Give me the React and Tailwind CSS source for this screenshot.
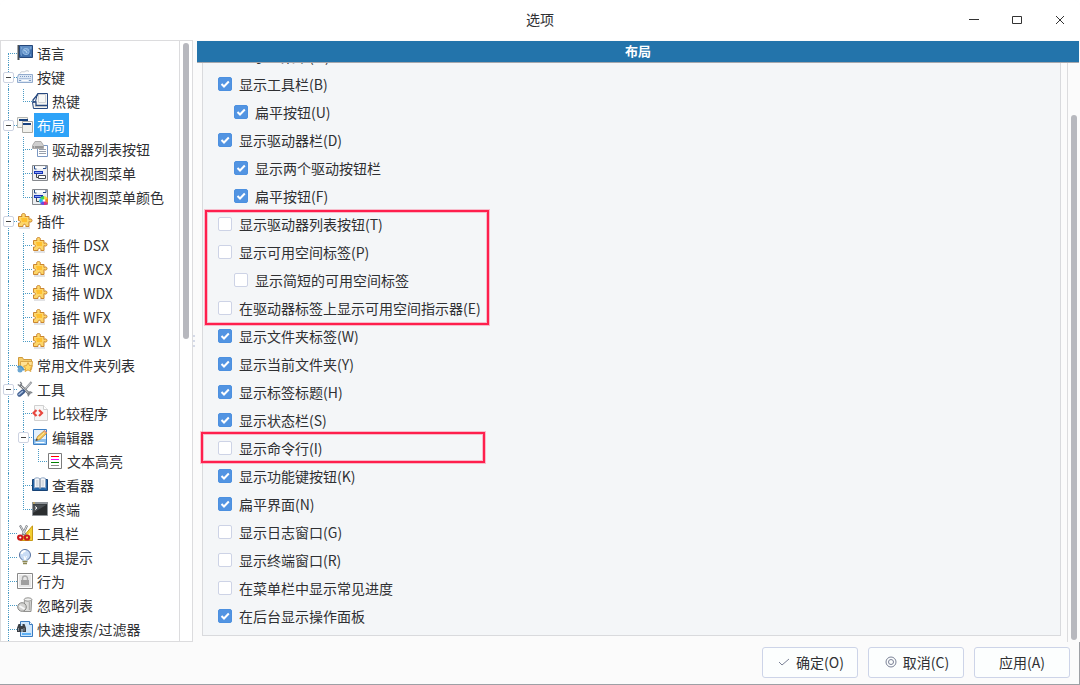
import React, { useState } from 'react';

const Svg = ({ children }) => (
  <svg width="16" height="16" viewBox="0 0 16 16" fill="none" className="block shrink-0" aria-hidden="true">
    {children}
  </svg>
);

/* Tree icons */
const icons = {
  flag: (
    <Svg>
      <path d="M.5 0h2v15h-2z" fill="#4b5157" />
      <path d="M2.500.5h13v12h-13z" fill="#3f6fac" stroke="#24477a" />
      <path d="M3 1h12v3L3 10z" fill="#5f8dc3" />
      <circle cx="9" cy="6.500" r="3.200" fill="#6c9bd0" stroke="#8fb8e2" />
      <path d="M7 5l2 1 1 2M10 4.500l1 1" stroke="#b8d6f2" />
      <path d="M4 3h1M13 3h1M4 10h1M13 10h1" stroke="#8fb8e2" />
    </Svg>
  ),
  keyboard: (
    <Svg>
      <path d="M3 4.500c1-3 4-1 5-2s3-1 4 0" stroke="#c3c8cf" />
      <path d="M1.500 5.500h14v8H.5v-5z" fill="#dde8f5" stroke="#93acce" />
      <path d="M3 7.500h11M2.500 9.500h12" stroke="#7c9ac4" strokeDasharray="1 1" />
      <path d="M2 11.500h2M12 11.500h2" stroke="#7c9ac4" />
      <path d="M5 11.500h6" stroke="#fff" />
    </Svg>
  ),
  hotkey: (
    <Svg>
      <path d="M5.500.5h10v15H1.500L.5 9.500l3-1z" fill="#f4f4f1" stroke="#27487f" />
      <path d="M6.500 1.500h7v8h-7z" fill="#f8f8f6" stroke="#d0d2d5" />
      <path d="M6 1L1 7v2h3v3.500h11" stroke="#27487f" strokeWidth="1.300" />
      <path d="M3 13.500h11" stroke="#bcbfc4" />
    </Svg>
  ),
  windows: (
    <Svg>
      <path d="M.5.5h10v10H.5z" fill="#f5f5f1" stroke="#b7b8b3" />
      <path d="M2 2h9v2H2z" fill="#18427f" />
      <path d="M5.500 4.500h10v11h-10z" fill="#f1f1ec" stroke="#aaaaa5" />
      <path d="M6 5h9v3H6z" fill="#fff" />
      <path d="M6 6h8v2H6z" fill="#18427f" />
    </Svg>
  ),
  driveList: (
    <Svg>
      <path d="M5.500 4.500h10v11h-10z" fill="#fff" stroke="#7b98c3" />
      <path d="M7 8.500h7M7 10.500h7M7 12.500h7" stroke="#98a0ac" />
      <path d="M3 .5h6l2.500 4v3H.5v-3z" fill="#cfcfcf" stroke="#ababab" />
      <path d="M1 5h10v2H1z" fill="#979797" />
      <path d="M2 6h1" stroke="#e8e8e8" />
    </Svg>
  ),
  treeMenu: (
    <Svg>
      <path d="M.5.500h15v15H.5z" fill="#eceef1" stroke="#85888d" />
      <path d="M2 1.500h12v2H2z" fill="#fff" />
      <path d="M2.500 1v3h2M11 3.500h3V1" stroke="#274a86" />
      <path d="M2 6h9v3H2z" fill="#1735b8" />
      <path d="M3 7.500h7" stroke="#8aa0f5" />
      <path d="M4.500 9v3.500H6" stroke="#444" />
      <path d="M6.500 10.500h7v3h-7z" fill="#fff" stroke="#454a52" />
    </Svg>
  ),
  treeColor: (
    <Svg>
      <path d="M.5.500h15v15H.5z" fill="#eceef1" stroke="#85888d" />
      <path d="M2 1.500h12v2H2z" fill="#fff" />
      <path d="M2.500 1v3h2M11 3.500h3V1" stroke="#274a86" />
      <path d="M2 6h9v3H2z" fill="#1735b8" />
      <path d="M3 7.500h6" stroke="#8aa0f5" />
      <path d="M4.500 9v3.500H7" stroke="#454a52" />
      <path d="M12 11.500V7a4.500 4.500 0 0 1 4 2.500z" fill="#f4e13a" />
      <path d="M12 11.500l4-2.500v5z" fill="#f08a24" />
      <path d="M12 11.500l4 2.500a4.500 4.500 0 0 1-4 2z" fill="#e5307c" />
      <path d="M12 11.500V16a4.500 4.500 0 0 1-4-2z" fill="#6a4be8" />
      <path d="M12 11.500L8 14a4.500 4.500 0 0 1 0-5z" fill="#22b9e8" />
      <path d="M12 11.500L8 9a4.500 4.500 0 0 1 4-2z" fill="#3fd05a" />
      <circle cx="12" cy="11.500" r="1.200" fill="#fff" />
    </Svg>
  ),
  puzzle: (
    <Svg>
      <path d="M2 15h11" stroke="#c3c6cc" />
      <path
        d="M1.500 3.500H5C4 1.500 5 .5 6.500.5S9 1.500 8 3.500h4v3c1-1 3-.8 3 1s-2 2-3 1v5H8.800c.7-3-3.300-3-2.800 0H1.500V10c2.500 1 2.500-3 0-2.500z"
        fill="#fdd669"
        stroke="#cb8630"
      />
      <path d="M4 5h6v4H5z" fill="#ffc02f" />
    </Svg>
  ),
  folderStar: (
    <Svg>
      <path d="M1.500.5h4l1 2h8v9h-13z" fill="#f5cd6b" stroke="#cf9a3c" />
      <path d="M3.500 4.500h12l-1 8h-11z" fill="#ffe193" stroke="#d9a647" />
      <path d="M.5 10.500c2-2 5-1 6 3" stroke="#4d97cf" strokeWidth="2" />
      <circle cx="3" cy="13" r="2.500" fill="#6aa6d2" />
      <path d="M11 5.500l1.500 3 3 .4-2.300 2.300.7 3.300-2.900-1.600L8 14.500l.6-3.300L6.500 9l3-.4z" fill="#ffd966" stroke="#d7982f" strokeWidth=".8" />
    </Svg>
  ),
  tools: (
    <Svg>
      <path d="M3 4l10 9.500" stroke="#6d7176" strokeWidth="2.600" />
      <path d="M3.500 4.500l9 8.500" stroke="#dcdee0" />
      <path d="M.8 3.500l2 1.300L4.600 3 3.300.8M11.500 15.300l-.5-2.300 2-2.200 2.300 1" stroke="#7c8187" strokeWidth="1.300" />
      <path d="M14.500 1L8 8.500" stroke="#8b8f95" strokeWidth="2" />
      <path d="M14 1.500l-5.500 6" stroke="#e3e5e7" strokeWidth=".8" />
      <path d="M6 10.500l-3.500 3" stroke="#3f5d8e" strokeWidth="4.400" strokeLinecap="round" />
      <path d="M5.500 10.500l-3.500 3" stroke="#a9bfdf" strokeWidth="1.600" strokeLinecap="round" />
    </Svg>
  ),
  diff: (
    <Svg>
      <path d="M2.500.5h9l4 4v11h-13z" fill="#f7f7f7" stroke="#d0d0d0" />
      <path d="M11.500.5v4h4" fill="#fff" stroke="#d0d0d0" />
      <path d="M4.500 5L1.500 8l3 3M7 5l3 3-3 3" stroke="#e8473e" strokeWidth="2.200" />
    </Svg>
  ),
  editor: (
    <Svg>
      <path d="M1.500.5h13v15h-13z" fill="#e4f0fb" stroke="#3d7fc4" />
      <path d="M2 10h12v5H2z" fill="#8cc0ee" />
      <path d="M3.500 13.500h9" stroke="#fff" />
      <path d="M4 11.500l1.500-4 7-6L15 4l-7 6.500z" fill="#f6c552" stroke="#b88a3c" strokeWidth=".8" />
      <path d="M6 9.500l6.500-6" stroke="#fde9a8" />
      <path d="M12 1.500L14.500 4" stroke="#e0948a" strokeWidth="1.500" />
      <path d="M3.500 12l1-2.500 1.500 1.500z" fill="#3a3f48" />
    </Svg>
  ),
  highlight: (
    <Svg>
      <path d="M1.500.5h13v15h-13z" fill="#fff" stroke="#7c7c7c" />
      <path d="M4 3.500h8" stroke="#f00" />
      <path d="M4 6.500h8" stroke="#f0f" />
      <path d="M4 9.500h8" stroke="#008000" />
      <path d="M4 12.500h8" stroke="#8c8c8c" />
    </Svg>
  ),
  book: (
    <Svg>
      <path d="M.5 2.500h15v11H.5z" fill="#2465a8" stroke="#174275" />
      <path d="M2.500 1.500c2-1 4-1 5.500.5 1.500-1.500 3.500-1.500 5.500-.5V11c-2-1-4-1-5.500.5C6.500 10 4.500 10 2.500 11z" fill="#f4f6f9" stroke="#8ea6c4" />
      <path d="M8 2v9.500" stroke="#66778c" />
      <path d="M4 4h2.500M4 6h2.500M4 8h2.500M9.500 4H12M9.500 6H12M9.500 8H12" stroke="#bcc4ce" />
    </Svg>
  ),
  terminal: (
    <Svg>
      <path d="M.5 1.500h15v13H.5z" fill="#2b2e30" stroke="#8f9499" />
      <path d="M0 1h16v2H0z" fill="#8f9499" />
      <path d="M1 2h2" stroke="#e0b13c" />
      <path d="M1 3.500h14L1 12z" fill="#4b5054" />
      <path d="M3 5.500l2 1.500-2 1.500" stroke="#fff" />
    </Svg>
  ),
  scissors: (
    <Svg>
      <path d="M15.500.8v14.700H3z" fill="#f2cf32" stroke="#c79a17" />
      <path d="M13 7.500v5H9z" fill="#fff3a7" />
      <path d="M3 .5l5.500 9.500M10 .5L5.500 10" stroke="#777b80" strokeWidth="2.200" />
      <path d="M3.500 1l4.500 8.500M9.700 1L6 9" stroke="#dcdee0" />
      <ellipse cx="3.300" cy="12.500" rx="2.200" ry="2" stroke="#cc1a1c" strokeWidth="2.200" />
      <ellipse cx="10" cy="12.500" rx="2.200" ry="2" stroke="#cc1a1c" strokeWidth="2.200" />
    </Svg>
  ),
  bulb: (
    <Svg>
      <circle cx="8" cy="6" r="5.500" fill="#c9dcf5" stroke="#55709f" />
      <path d="M5.500 10.500h5v2h-5z" fill="#c9dcf5" />
      <path d="M4.500 5c.5-2 2-3 4-3" stroke="#fff" strokeWidth="2" />
      <path d="M7 7l1 4 1.500-4" stroke="#fff" />
      <path d="M5.500 12.500h5M6 14.500h4" stroke="#8c8752" strokeWidth="1.500" />
    </Svg>
  ),
  lock: (
    <Svg>
      <path d="M.5.5h15v15H.5z" fill="#fbfbfb" stroke="#888" />
      <path d="M2 2h12v12H2z" fill="#e6e6e6" />
      <path d="M5.500 7V5.500a2.500 2.500 0 0 1 5 0V7" stroke="#a8a8a8" strokeWidth="1.400" />
      <path d="M4 7h8v5H4z" fill="#9f9f9f" />
    </Svg>
  ),
  ignore: (
    <Svg>
      <path d="M7.500 2.500h7.200l-.7 12H6.500z" fill="#dcdcda" stroke="#939391" />
      <ellipse cx="11" cy="2.500" rx="3.800" ry="1.700" fill="#f1f1f0" stroke="#939391" />
      <path d="M12.500 5v8" stroke="#b0b0ae" strokeWidth="1.500" />
      <circle cx="5" cy="10" r="4.300" fill="#d3d3d1" stroke="#878785" />
      <path d="M2.500 9l5 3" stroke="#f7f7f7" strokeWidth="2" />
    </Svg>
  ),
  search: (
    <Svg>
      <path d="M3.500.5h9l3 3v12h-12z" fill="#cfe6fb" stroke="#3a7cc2" />
      <path d="M12.500.5v3h3" fill="#fff" stroke="#3a7cc2" />
      <path d="M5 12h9v2H5z" fill="#5fb1f5" />
      <path d="M1.500 3h2v2h2V3h2L9 7v4H5.500V8h-1v3H0V7z" fill="#3b3f45" />
      <path d="M1.500 7v3M7 7v3" stroke="#858c95" />
    </Svg>
  ),
};

const tree = [
  { name: '语言', icon: 'flag' },
  { name: '按键', icon: 'keyboard', children: [{ name: '热键', icon: 'hotkey' }] },
  {
    name: '布局',
    icon: 'windows',
    children: [
      { name: '驱动器列表按钮', icon: 'driveList' },
      { name: '树状视图菜单', icon: 'treeMenu' },
      { name: '树状视图菜单颜色', icon: 'treeColor' },
    ],
  },
  {
    name: '插件',
    icon: 'puzzle',
    children: [
      { name: '插件 DSX', icon: 'puzzle' },
      { name: '插件 WCX', icon: 'puzzle' },
      { name: '插件 WDX', icon: 'puzzle' },
      { name: '插件 WFX', icon: 'puzzle' },
      { name: '插件 WLX', icon: 'puzzle' },
    ],
  },
  { name: '常用文件夹列表', icon: 'folderStar' },
  {
    name: '工具',
    icon: 'tools',
    children: [
      { name: '比较程序', icon: 'diff' },
      { name: '编辑器', icon: 'editor', children: [{ name: '文本高亮', icon: 'highlight' }] },
      { name: '查看器', icon: 'book' },
      { name: '终端', icon: 'terminal' },
    ],
  },
  { name: '工具栏', icon: 'scissors' },
  { name: '工具提示', icon: 'bulb' },
  { name: '行为', icon: 'lock' },
  { name: '忽略列表', icon: 'ignore' },
  { name: '快速搜索/过滤器', icon: 'search' },
];

const optionGroups = [
  {
    items: [
      { label: '显示主菜单(M)', checked: true },
      { label: '显示工具栏(B)', checked: true },
      { label: '扁平按钮(U)', checked: true, indent: true },
      { label: '显示驱动器栏(D)', checked: true },
      { label: '显示两个驱动按钮栏', checked: true, indent: true },
      { label: '扁平按钮(F)', checked: true, indent: true },
    ],
  },
  {
    mark: 'top-0 -bottom-[3px] left-0.5',
    items: [
      { label: '显示驱动器列表按钮(T)' },
      { label: '显示可用空间标签(P)' },
      { label: '显示简短的可用空间标签', indent: true },
      { label: '在驱动器标签上显示可用空间指示器(E)' },
    ],
  },
  {
    items: [
      { label: '显示文件夹标签(W)', checked: true },
      { label: '显示当前文件夹(Y)', checked: true },
      { label: '显示标签标题(H)', checked: true },
      { label: '显示状态栏(S)', checked: true },
    ],
  },
  {
    mark: '-top-0.5 -bottom-px -left-0.5',
    items: [{ label: '显示命令行(I)' }],
  },
  {
    items: [
      { label: '显示功能键按钮(K)', checked: true },
      { label: '扁平界面(N)', checked: true },
      { label: '显示日志窗口(G)' },
      { label: '显示终端窗口(R)' },
      { label: '在菜单栏中显示常见进度' },
      { label: '在后台显示操作面板', checked: true },
    ],
  },
];

const TreeNode = ({ node, guides = [], first, last, selected, onSelect }) => {
  const [open, setOpen] = useState(true);
  const active = selected === node.name;

  return (
    <li>
      <div className="relative flex h-6 pl-[7px]">
        {guides.map((line, i) => (
          <span key={i} className={`w-[15px] shrink-0 border-dotted border-[#4b9bc4] ${line ? 'border-l' : ''}`} />
        ))}
        <span className="relative flex w-[9px] shrink-0 flex-col">
          <span className={`h-[13px] border-b border-dotted border-[#4b9bc4] ${first ? '' : 'border-l'}`} />
          <span className={`h-[11px] border-dotted border-[#4b9bc4] ${last ? '' : 'border-l'}`} />
          {node.children && (
            <button
              type="button"
              aria-label={node.name}
              aria-expanded={open}
              onClick={() => setOpen(!open)}
              className="absolute top-[7px] -left-[5px] flex size-[11px] items-center justify-center rounded-xs border border-[#cdd3e2] bg-white"
            >
              <span className="h-px w-[5px] bg-[#444]" />
            </button>
          )}
        </span>
        <span className="flex items-center">{icons[node.icon]}</span>
        <button
          type="button"
          onClick={() => onSelect(node.name)}
          className={`ml-px h-6 pr-1 pl-[3px] leading-6 whitespace-nowrap ${active ? 'bg-[#2ea3f8] text-white' : ''}`}
        >
          {node.name}
        </button>
      </div>
      {node.children && open && (
        <ul>
          {node.children.map((child, i) => (
            <TreeNode
              key={child.name}
              node={child}
              guides={[...guides, !last]}
              last={i === node.children.length - 1}
              selected={selected}
              onSelect={onSelect}
            />
          ))}
        </ul>
      )}
    </li>
  );
};

const Option = ({ label, checked, indent }) => (
  <label className={`flex h-7 items-center gap-[7px] ${indent ? 'pl-[31px]' : 'pl-[15px]'}`}>
    <span className="relative flex size-3.5">
      <input
        type="checkbox"
        defaultChecked={checked}
        className="peer size-3.5 appearance-none rounded-xs border border-[#cdd3e6] bg-white checked:border-[#4c90e0] checked:bg-[#5294e2]"
      />
      <svg viewBox="0 0 14 14" className="pointer-events-none absolute inset-0 hidden size-3.5 peer-checked:block" fill="none">
        <path d="M3.500 7l2.500 2.500 4.800-5" stroke="#fff" strokeWidth="2" />
      </svg>
    </span>
    {label}
  </label>
);

const Sidebar = () => {
  const [selected, setSelected] = useState('布局');

  return (
    <nav className="flex w-[193px] shrink-0 border border-[#dcdcde] bg-white">
      <ul className="flex-1 overflow-hidden">
        {tree.map((node, i) => (
          <TreeNode key={node.name} node={node} first={i === 0} selected={selected} onSelect={setSelected} />
        ))}
      </ul>
      {/* Scrollbar */}
      <div className="flex w-[13px] justify-center border-l border-[#dcdcde] pt-0.5">
        <div className="h-[296px] w-1.5 rounded-full bg-[#b7b8be]" />
      </div>
    </nav>
  );
};

const TitleBar = () => (
  <header className="grid h-10 shrink-0 grid-cols-3 items-center bg-white">
    <h1 className="col-start-2 pb-0.5 text-center">选项</h1>
    <div className="flex justify-end gap-[27px] pr-3">
      <button type="button" aria-label="最小化">
        <Svg><path d="M3 7.500h10" stroke="#333" /></Svg>
      </button>
      <button type="button" aria-label="最大化">
        <Svg><path d="M3.500 4.500h9v7h-9z" stroke="#333" /></Svg>
      </button>
      <button type="button" aria-label="关闭">
        <Svg><path d="M4 4l8 8M12 4l-8 8" stroke="#333" /></Svg>
      </button>
    </div>
  </header>
);

const FooterButton = ({ children }) => (
  <button type="button" className="flex h-[31px] w-24 items-center justify-center gap-1 rounded-[3px] border border-[#cdd4e8] bg-[#fcfefe]">
    {children}
  </button>
);

const App = () => {
  return (
    <div className="flex h-screen flex-col overflow-hidden rounded-t-md border-b border-[#9da0a5] bg-[#fbfbfb] font-['Noto_Sans_CJK_SC',sans-serif] text-sm text-[#2f3033]">
      <TitleBar />

      <div className="flex min-h-0 flex-1">
        <Sidebar />

        {/* Splitter handle */}
        <div className="flex w-1 shrink-0 flex-col items-start justify-center gap-[3px]">
          <span className="size-0.5 bg-[#d5dae8]" />
          <span className="size-0.5 bg-[#d5dae8]" />
          <span className="size-0.5 bg-[#d5dae8]" />
        </div>

        <main className="flex min-w-0 flex-1 flex-col pt-px">
          <h2 className="mr-px h-[22px] shrink-0 border-b border-[#a5a7ad] bg-[#2374ab] text-center text-[13px] leading-5 font-bold text-white">
            布局
          </h2>
          <div className="flex min-h-0 flex-1">
            {/* Scrolled to the end, so the rows above are cut off */}
            <div className="flex min-w-0 flex-1 flex-col justify-end overflow-hidden pr-1.5 pb-1.5 pl-[5px]">
              <section className="shrink-0 border border-[#d9dadd] bg-[#f4f6f8] pb-[5px]">
                {optionGroups.map((group, i) => (
                  <div key={i} className="relative">
                    {group.items.map((item) => (
                      <Option key={item.label} {...item} />
                    ))}
                    {group.mark && (
                      <div
                        className={`pointer-events-none absolute w-[284px] border-2 border-[#ff1f4d] shadow-[0_0_0_1px_#ff1f4d44,inset_0_0_0_1px_#ff1f4d44] ${group.mark}`}
                      />
                    )}
                  </div>
                ))}
              </section>
            </div>
            <div className="flex w-[13px] shrink-0 items-end justify-center border-l border-[#dcdcde] pb-0.5">
              <div className="h-[525px] w-1.5 rounded-full bg-[#b7b8be]" />
            </div>
          </div>
        </main>
      </div>

      <footer className="flex h-[42px] shrink-0 items-center justify-end gap-2.5 border-r border-[#9da0a5] pr-[9px] pb-0.5">
        <FooterButton>
          <Svg><path d="M3 8l3 3 7-6" stroke="#7a8196" /></Svg>
          确定(O)
        </FooterButton>
        <FooterButton>
          <Svg>
            <circle cx="8" cy="8" r="5" stroke="#7a8196" />
            <circle cx="8" cy="8" r="2.500" stroke="#7a8196" />
          </Svg>
          取消(C)
        </FooterButton>
        <FooterButton>应用(A)</FooterButton>
      </footer>
    </div>
  );
};

export default App;
